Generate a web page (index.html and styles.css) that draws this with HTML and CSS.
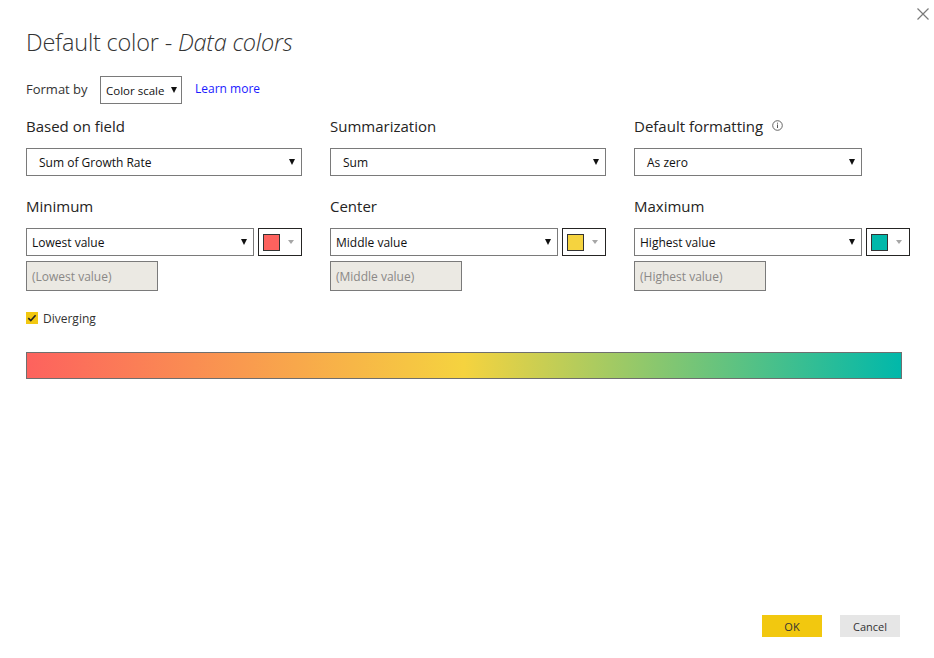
FILE: index.html
```html
<!DOCTYPE html>
<html lang="en">
<head>
<meta charset="utf-8">
<title>Default color - Data colors</title>
<link rel="stylesheet" href="styles.css">
</head>
<body>
<div class="dialog">
  <button class="close" aria-label="Close">
    <svg width="12" height="12" viewBox="0 0 12 12"><path d="M0.5 0.5 L11.5 11.5 M11.5 0.5 L0.5 11.5" stroke="#7a7a7a" stroke-width="1.2" fill="none"/></svg>
  </button>
  <h1 class="title">Default color - <em>Data colors</em></h1>

  <div class="format-row">
    <span class="format-label">Format by</span>
    <div class="mini-select">Color scale <span class="tri"></span></div>
    <a class="learn" href="#">Learn more</a>
  </div>

  <div class="grid row1">
    <div class="field">
      <div class="label">Based on field</div>
      <div class="select wide padded">Sum of Growth Rate <span class="tri"></span></div>
    </div>
    <div class="field">
      <div class="label">Summarization</div>
      <div class="select wide padded">Sum <span class="tri"></span></div>
    </div>
    <div class="field">
      <div class="label">Default formatting
        <svg class="info" width="11" height="11" viewBox="0 0 11 11"><circle cx="5.5" cy="5.5" r="4.8" stroke="#555" stroke-width="0.9" fill="none"/><rect x="5" y="4.5" width="1" height="3.5" fill="#555"/><rect x="5" y="2.7" width="1" height="1" fill="#555"/></svg>
      </div>
      <div class="select narrow padded">As zero <span class="tri"></span></div>
    </div>
  </div>

  <div class="grid row2">
    <div class="field">
      <div class="label">Minimum</div>
      <div class="pick">
        <div class="select narrow">Lowest value <span class="tri"></span></div>
        <div class="color-btn"><span class="swatch red"></span><span class="gtri"></span></div>
      </div>
      <div class="disabled-input">(Lowest value)</div>
    </div>
    <div class="field">
      <div class="label">Center</div>
      <div class="pick">
        <div class="select narrow">Middle value <span class="tri"></span></div>
        <div class="color-btn"><span class="swatch yellow"></span><span class="gtri"></span></div>
      </div>
      <div class="disabled-input">(Middle value)</div>
    </div>
    <div class="field">
      <div class="label">Maximum</div>
      <div class="pick">
        <div class="select narrow">Highest value <span class="tri"></span></div>
        <div class="color-btn"><span class="swatch teal"></span><span class="gtri"></span></div>
      </div>
      <div class="disabled-input">(Highest value)</div>
    </div>
  </div>

  <label class="check-row">
    <span class="checkbox">
      <svg width="12" height="12" viewBox="0 0 12 12"><path d="M2.3 6.2 L4.8 8.6 L9.6 3.2" stroke="#252423" stroke-width="1.6" fill="none"/></svg>
    </span>
    <span class="check-text">Diverging</span>
  </label>

  <div class="gradient"></div>

  <div class="footer">
    <button class="btn ok">OK</button>
    <button class="btn cancel">Cancel</button>
  </div>
</div>
</body>
</html>
```

FILE: styles.css
```css
* { box-sizing: border-box; }
html, body { margin: 0; padding: 0; background: #fff; }
body {
  font-family: "Open Sans", "Noto Sans", "Liberation Sans", sans-serif;
  color: #252423;
}
.dialog {
  position: relative;
  width: 934px;
  height: 658px;
  padding: 26px 0 0 26px;
  display: flex;
  flex-direction: column;
}
.close {
  position: absolute;
  top: 8px;
  right: 5px;
  border: 0;
  background: none;
  padding: 0;
  width: 12px;
  height: 12px;
  line-height: 0;
}
.title {
  margin: 0;
  font-size: 23.5px;
  font-weight: 300;
  line-height: 32px;
  color: #333;
  letter-spacing: -0.2px;
}
.title em { font-style: italic; }
.format-row {
  margin-top: 18px;
  height: 28px;
  display: flex;
  align-items: center;
}
.format-label { font-size: 13px; width: 74px; color: #333; padding-bottom: 3px; }
.mini-select {
  width: 82px;
  height: 28px;
  border: 1px solid #7a7a7a;
  display: flex;
  align-items: center;
  padding: 0 4px 0 5px;
  font-size: 11.5px;
  color: #111;
  justify-content: space-between;
}
.learn {
  margin-left: 13px;
  font-size: 12px;
  color: #1a1aff;
  text-decoration: none;
  padding-bottom: 3px;
}
.grid {
  display: grid;
  grid-template-columns: 304px 304px 304px;
}
.row1 { margin-top: 11px; }
.row2 { margin-top: 19px; }
.label {
  font-size: 15px;
  line-height: 22px;
  height: 22px;
  margin-bottom: 11px;
  display: flex;
  align-items: center;
  color: #252423;
}
.info { margin-left: 9px; margin-top: -2px; }
.select {
  height: 28px;
  border: 1px solid #7a7a7a;
  display: flex;
  align-items: center;
  justify-content: space-between;
  font-size: 12px;
  color: #111;
  padding: 0 6px 0 5px;
}
.select.padded { padding-left: 12px; }
.select.wide { width: 276px; }
.select.narrow { width: 228px; }
.tri {
  width: 0; height: 0;
  border-left: 3.5px solid transparent;
  border-right: 3.5px solid transparent;
  border-top: 6px solid #111;
}
.pick { display: flex; gap: 4px; }
.color-btn {
  width: 44px;
  height: 28px;
  border: 1px solid #252423;
  display: flex;
  align-items: center;
  padding-left: 4px;
}
.swatch {
  width: 17px;
  height: 17px;
  border: 1px solid #333;
}
.swatch.red { background: #fd625e; }
.swatch.yellow { background: #f5d33f; }
.swatch.teal { background: #01b8aa; }
.gtri {
  margin-left: 8px;
  width: 0; height: 0;
  border-left: 3.5px solid transparent;
  border-right: 3.5px solid transparent;
  border-top: 4px solid #a6a6a6;
}
.disabled-input {
  margin-top: 5px;
  width: 132px;
  height: 30px;
  border: 1px solid #7a7a7a;
  background: #ebe9e3;
  font-size: 12px;
  color: #8a8886;
  display: flex;
  align-items: center;
  padding-left: 5px;
}
.check-row {
  margin-top: 18px;
  height: 18px;
  display: flex;
  align-items: center;
}
.checkbox {
  width: 12px;
  height: 12px;
  background: #f2c811;
  line-height: 0;
}
.check-text { margin-left: 5px; font-size: 12px; color: #333; }
.gradient {
  margin-top: 25px;
  width: 876px;
  height: 27px;
  border: 1px solid #6f6f6f;
  background: linear-gradient(to right, #fd625e 0%, #f5d33f 50%, #01b8aa 100%);
}
.footer {
  margin-top: auto;
  margin-bottom: 21px;
  display: flex;
  justify-content: flex-end;
  gap: 18px;
  padding-right: 34px;
}
.btn {
  width: 60px;
  height: 22px;
  border: 0;
  font-family: inherit;
  font-size: 11px;
  color: #333;
  padding: 0;
}
.btn.ok { background: #f2c80f; }
.btn.cancel { background: #e6e6e6; }
```
